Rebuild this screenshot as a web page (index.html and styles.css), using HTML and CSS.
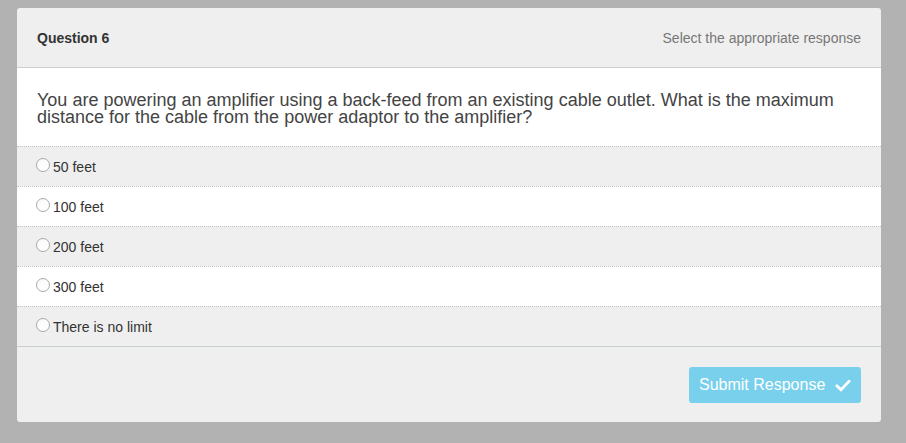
FILE: index.html
```html
<!DOCTYPE html>
<html>
<head>
<meta charset="utf-8">
<link rel="stylesheet" href="styles.css">
</head>
<body>
<div class="card">
  <div class="card-header">
    <span class="q-label">Question 6</span>
    <span class="q-hint">Select the appropriate response</span>
  </div>
  <div class="q-text">You are powering an amplifier using a back-feed from an existing cable outlet. What is the maximum distance for the cable from the power adaptor to the amplifier?</div>
  <div class="options">
    <label class="option alt"><span class="radio"></span><span class="opt-text">50 feet</span></label>
    <label class="option"><span class="radio"></span><span class="opt-text">100 feet</span></label>
    <label class="option alt"><span class="radio"></span><span class="opt-text">200 feet</span></label>
    <label class="option"><span class="radio"></span><span class="opt-text">300 feet</span></label>
    <label class="option alt"><span class="radio"></span><span class="opt-text">There is no limit</span></label>
  </div>
  <div class="card-footer">
    <button class="submit"><span class="submit-label">Submit Response</span>
      <svg class="check" width="16" height="13" viewBox="0 0 16 13"><path d="M2 7 L6 10.8 L14 2.4" fill="none" stroke="#fff" stroke-width="2.8" stroke-linecap="square"/></svg>
    </button>
  </div>
</div>
</body>
</html>
```
FILE: styles.css
```css
html, body {
  margin: 0;
  background: #b2b2b2;
}
body {
  padding: 8px 25px 0 17px;
  font-family: "Liberation Sans", Arial, sans-serif;
  color: #333;
}
.card {
  width: 864px;
  background: #efefef;
  border-radius: 3px;
  overflow: hidden;
}
.card-header {
  height: 59px;
  border-bottom: 1px solid #cfcfcf;
  display: flex;
  align-items: center;
  justify-content: space-between;
  padding: 0 20px;
  font-size: 14px;
}
.q-label {
  font-weight: bold;
  color: #333;
  font-size: 14px;
}
.q-hint {
  color: #777;
}
.q-text {
  background: #fff;
  padding: 24px 20px 18px 20px;
  height: 36px;
  font-size: 18px;
  line-height: 17px;
  color: #444;
}
.options {
  display: flex;
  flex-direction: column;
}
.option {
  height: 39px;
  border-top: 1px dotted #c4c4c4;
  display: flex;
  align-items: center;
  padding: 0 19px;
  background: #fff;
  font-size: 14px;
  color: #333;
}
.option.alt {
  background: #efefef;
}
.radio {
  width: 12px;
  height: 12px;
  border: 1px solid #a8a8a8;
  border-radius: 50%;
  background: linear-gradient(#fafafa, #ffffff);
  margin-right: 3px;
  margin-top: -3px;
  box-sizing: content-box;
}
.card-footer {
  border-top: 1px solid #c8d0d2;
  height: 75px;
  display: flex;
  justify-content: flex-end;
  align-items: flex-start;
  padding: 0 20px;
}
.submit {
  margin-top: 20px;
  width: 172px;
  height: 36px;
  border: none;
  border-radius: 3px;
  background: #79d0ec;
  color: #fff;
  font-family: "Liberation Sans", Arial, sans-serif;
  font-size: 16px;
  display: flex;
  align-items: center;
  padding: 0 10px;
  gap: 10px;
  white-space: nowrap;
}
.submit-label {
  flex: none;
}
.check {
  display: block;
  flex: none;
}
```
